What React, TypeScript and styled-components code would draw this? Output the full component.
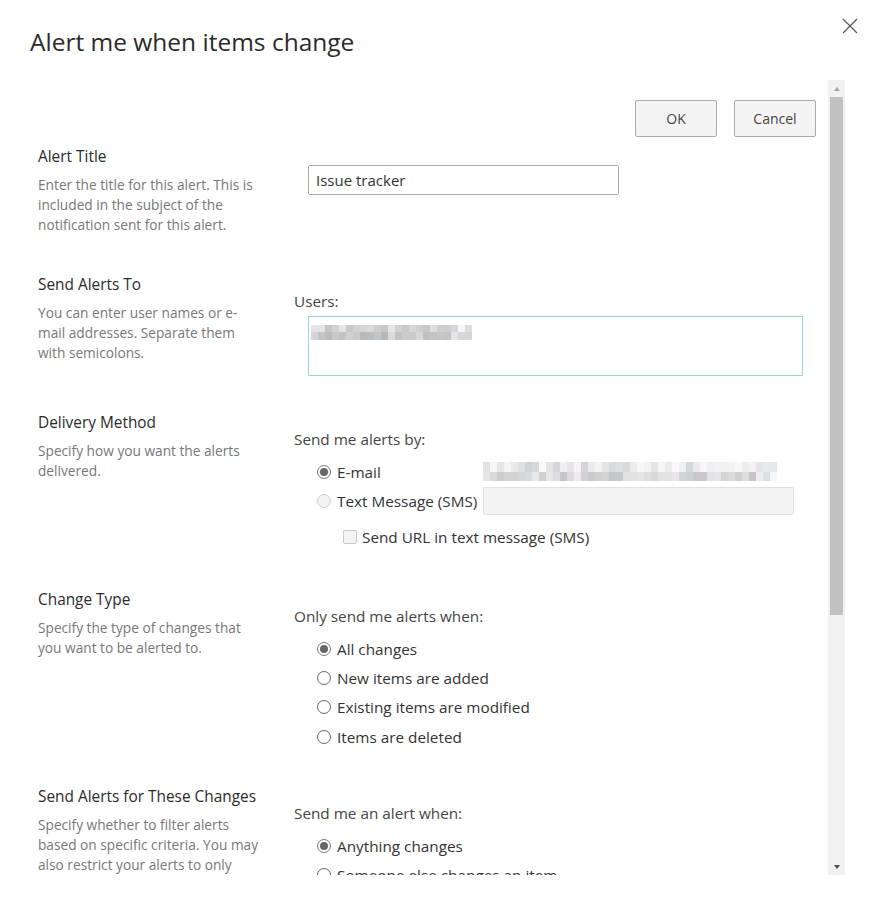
import React from "react";
import styled, { createGlobalStyle, css } from "styled-components";

const FONT = `"Open Sans", "Noto Sans", "Liberation Sans", sans-serif`;

const Global = createGlobalStyle`
  html, body { margin: 0; padding: 0; background: #fff; }
  body { font-family: ${FONT}; color: #333; }
  * { box-sizing: border-box; }
`;

const Dialog = styled.div`
  width: 875px;
  height: 904px;
  display: flex;
  flex-direction: column;
  background: #fff;
  overflow: hidden;
`;

const Header = styled.header`
  display: flex;
  justify-content: space-between;
  align-items: flex-start;
  height: 80px;
  padding: 0 10px 0 30px;
`;

const Title = styled.h1`
  margin: 26px 0 0;
  font-family: ${FONT};
  font-size: 24.5px;
  line-height: 32px;
  font-weight: 400;
  color: #2b2b2b;
`;

const CloseButton = styled.button`
  margin-top: 11px;
  width: 30px;
  height: 30px;
  padding: 0;
  border: 0;
  background: transparent;
  display: flex;
  align-items: center;
  justify-content: center;
  color: #555;
`;

const Frame = styled.div`
  display: flex;
  height: 795px;
  margin: 0 30px 0 20px;
`;

const Viewport = styled.div`
  flex: 1;
  overflow: hidden;
`;

const Content = styled.div`
  padding: 20px 12px 0 18px;
`;

const ButtonBar = styled.div`
  display: flex;
  justify-content: flex-end;
  gap: 17px;
`;

const Button = styled.button`
  width: 82px;
  height: 37px;
  border: 1px solid #ababab;
  border-radius: 2px;
  background: #f4f4f4;
  font-family: ${FONT};
  font-size: 14px;
  color: #444;
  padding: 0;
`;

const Section = styled.section<{ $gap: number }>`
  display: grid;
  grid-template-columns: 256px 1fr;
  margin-top: ${(p) => p.$gap}px;
`;

const Heading = styled.h2`
  margin: 0;
  font-family: ${FONT};
  font-size: 15.4px;
  line-height: 20px;
  font-weight: 400;
  color: #2b2b2b;
`;

const Desc = styled.p`
  margin: 8px 0 0;
  font-size: 13.7px;
  line-height: 20px;
  color: #777;
`;

const DescLine = styled.span`
  display: block;
  white-space: nowrap;
`;

const Field = styled.div<{ $pad: number }>`
  padding-top: ${(p) => p.$pad}px;
`;

const FieldLabel = styled.div`
  font-size: 15.3px;
  line-height: 21px;
  color: #444;
`;

const TextInput = styled.div`
  margin-left: 14px;
  width: 311px;
  height: 30px;
  border: 1px solid #ababab;
  border-radius: 2px;
  padding: 0 7px;
  display: flex;
  align-items: center;
  font-size: 15px;
  color: #333;
`;

const PeopleBox = styled.div`
  margin: 3.5px 0 0 14px;
  width: 495px;
  height: 60px;
  border: 1px solid #9ad6d6;
  padding: 8px 0 0 2px;
`;

const Options = styled.div`
  margin-top: 7px;
  padding-left: 23px;
  display: flex;
  flex-direction: column;
`;

const OptionRow = styled.div<{ $h?: number; $top?: number; $indent?: number }>`
  display: flex;
  align-items: center;
  height: ${(p) => p.$h ?? 29.33}px;
  margin-top: ${(p) => p.$top ?? 0}px;
  padding-left: ${(p) => p.$indent ?? 0}px;
  font-size: 15.3px;
  color: #333;
  white-space: nowrap;
`;

const ChoiceCell = styled.div`
  width: 166px;
  flex: none;
  display: flex;
  align-items: center;
`;

const Radio = styled.span<{ $checked?: boolean; $disabled?: boolean }>`
  flex: none;
  width: 14px;
  height: 14px;
  margin-right: 6px;
  border-radius: 50%;
  border: 1px solid ${(p) => (p.$disabled ? "#cdcdcd" : "#666")};
  background: ${(p) => (p.$disabled ? "#f4f4f4" : "#fff")};
  display: flex;
  align-items: center;
  justify-content: center;
  ${(p) =>
    p.$checked &&
    css`
      border-color: #7a7a7a;
      &::after {
        content: "";
        width: 8px;
        height: 8px;
        border-radius: 50%;
        background: #666;
      }
    `}
`;

const Checkbox = styled.span`
  flex: none;
  width: 14px;
  height: 14px;
  margin-right: 5px;
  border: 1px solid #c8c8c8;
  border-radius: 2px;
  background: #f4f4f4;
`;

const SmsInput = styled.div`
  width: 311px;
  height: 28px;
  border: 1px solid #e1e1e1;
  border-radius: 2px;
  background: #f4f4f4;
`;

const Mosaic = styled.div<{ $cols: number; $cell: number; $rowH: number }>`
  display: grid;
  grid-template-columns: repeat(${(p) => p.$cols}, ${(p) => p.$cell}px);
  grid-auto-rows: ${(p) => p.$rowH}px;
`;

const Pixel = styled.span``;

const Scrollbar = styled.div`
  width: 17px;
  flex: none;
  background: #f1f1f1;
  display: flex;
  flex-direction: column;
`;

const ScrollArrow = styled.div<{ $dir: "up" | "down" }>`
  height: 17px;
  flex: none;
  display: flex;
  align-items: center;
  justify-content: center;
  &::before {
    content: "";
    width: 0;
    height: 0;
    border-left: 3.5px solid transparent;
    border-right: 3.5px solid transparent;
    ${(p) =>
      p.$dir === "up"
        ? css`
            border-bottom: 4px solid #a3a3a3;
          `
        : css`
            border-top: 4px solid #505050;
          `}
  }
`;

const Track = styled.div`
  flex: 1;
  padding: 0 2px;
`;

const Thumb = styled.div`
  height: 518px;
  background: #c1c1c1;
`;

function makeColors(n: number, seed: number, base: number, spread: number, fadeFrom: number) {
  const out: string[] = [];
  let s = seed;
  for (let i = 0; i < n; i++) {
    s = (s * 9301 + 49297) % 233280;
    const r = s / 233280;
    let v = Math.round(base + (r - 0.5) * spread);
    const col = i % Math.ceil(n / 2);
    if (col >= fadeFrom) v = Math.min(245, v + 18);
    const tint = Math.round((r - 0.5) * 8);
    out.push(`rgb(${v + tint},${v},${v + Math.abs(tint)})`);
  }
  return out;
}

function lighten(c: string) {
  const m = c.match(/\d+/g)!.map(Number);
  return `rgb(${Math.min(250, m[0] + 14)},${Math.min(250, m[1] + 14)},${Math.min(250, m[2] + 14)})`;
}

const Blur: React.FC<{ cols: number; cell: number; rowH: number; seed: number; base: number; spread: number; fadeFrom: number }> = ({
  cols,
  cell,
  rowH,
  seed,
  base,
  spread,
  fadeFrom,
}) => {
  const colors = makeColors(cols * 2, seed, base, spread, fadeFrom);
  return (
    <Mosaic $cols={cols} $cell={cell} $rowH={rowH}>
      {colors.map((c, i) => (
        <Pixel key={i} style={{ background: i < cols ? lighten(c) : c }} />
      ))}
    </Mosaic>
  );
};

const CloseIcon = () => (
  <svg width="16" height="16" viewBox="0 0 16 16">
    <path d="M1 1 L15 15 M15 1 L1 15" stroke="currentColor" strokeWidth="1.2" fill="none" />
  </svg>
);

export default function App() {
  return (
    <>
      <Global />
      <Dialog>
        <Header>
          <Title>Alert me when items change</Title>
          <CloseButton aria-label="Close">
            <CloseIcon />
          </CloseButton>
        </Header>
        <Frame>
          <Viewport>
            <Content>
              <ButtonBar>
                <Button>OK</Button>
                <Button>Cancel</Button>
              </ButtonBar>

              <Section $gap={10}>
                <div>
                  <Heading>Alert Title</Heading>
                  <Desc>
                    <DescLine>Enter the title for this alert. This is</DescLine>
                    <DescLine>included in the subject of the</DescLine>
                    <DescLine>notification sent for this alert.</DescLine>
                  </Desc>
                </div>
                <Field $pad={18}>
                  <TextInput>Issue tracker</TextInput>
                </Field>
              </Section>

              <Section $gap={40}>
                <div>
                  <Heading>Send Alerts To</Heading>
                  <Desc>
                    <DescLine>You can enter user names or e-</DescLine>
                    <DescLine>mail addresses. Separate them</DescLine>
                    <DescLine>with semicolons.</DescLine>
                  </Desc>
                </div>
                <Field $pad={16}>
                  <FieldLabel>Users:</FieldLabel>
                  <PeopleBox>
                    <Blur cols={23} cell={7} rowH={7.5} seed={17} base={200} spread={34} fadeFrom={20} />
                  </PeopleBox>
                </Field>
              </Section>

              <Section $gap={37.5}>
                <div>
                  <Heading>Delivery Method</Heading>
                  <Desc>
                    <DescLine>Specify how you want the alerts</DescLine>
                    <DescLine>delivered.</DescLine>
                  </Desc>
                </div>
                <Field $pad={16}>
                  <FieldLabel>Send me alerts by:</FieldLabel>
                  <Options>
                    <OptionRow>
                      <ChoiceCell>
                        <Radio $checked />
                        E-mail
                      </ChoiceCell>
                      <Blur cols={42} cell={7} rowH={9.5} seed={5} base={216} spread={40} fadeFrom={40} />
                    </OptionRow>
                    <OptionRow $h={30}>
                      <ChoiceCell>
                        <Radio $disabled />
                        Text Message (SMS)
                      </ChoiceCell>
                      <SmsInput />
                    </OptionRow>
                    <OptionRow $h={29} $top={6} $indent={26}>
                      <Checkbox />
                      Send URL in text message (SMS)
                    </OptionRow>
                  </Options>
                </Field>
              </Section>

              <Section $gap={38.7}>
                <div>
                  <Heading>Change Type</Heading>
                  <Desc>
                    <DescLine>Specify the type of changes that</DescLine>
                    <DescLine>you want to be alerted to.</DescLine>
                  </Desc>
                </div>
                <Field $pad={16}>
                  <FieldLabel>Only send me alerts when:</FieldLabel>
                  <Options>
                    <OptionRow>
                      <Radio $checked />
                      All changes
                    </OptionRow>
                    <OptionRow>
                      <Radio />
                      New items are added
                    </OptionRow>
                    <OptionRow>
                      <Radio />
                      Existing items are modified
                    </OptionRow>
                    <OptionRow>
                      <Radio />
                      Items are deleted
                    </OptionRow>
                  </Options>
                </Field>
              </Section>

              <Section $gap={35.7}>
                <div>
                  <Heading>Send Alerts for These Changes</Heading>
                  <Desc>
                    <DescLine>Specify whether to filter alerts</DescLine>
                    <DescLine>based on specific criteria. You may</DescLine>
                    <DescLine>also restrict your alerts to only</DescLine>
                  </Desc>
                </div>
                <Field $pad={16}>
                  <FieldLabel>Send me an alert when:</FieldLabel>
                  <Options>
                    <OptionRow>
                      <Radio $checked />
                      Anything changes
                    </OptionRow>
                    <OptionRow>
                      <Radio />
                      Someone else changes an item
                    </OptionRow>
                  </Options>
                </Field>
              </Section>
            </Content>
          </Viewport>
          <Scrollbar>
            <ScrollArrow $dir="up" />
            <Track>
              <Thumb />
            </Track>
            <ScrollArrow $dir="down" />
          </Scrollbar>
        </Frame>
      </Dialog>
    </>
  );
}
